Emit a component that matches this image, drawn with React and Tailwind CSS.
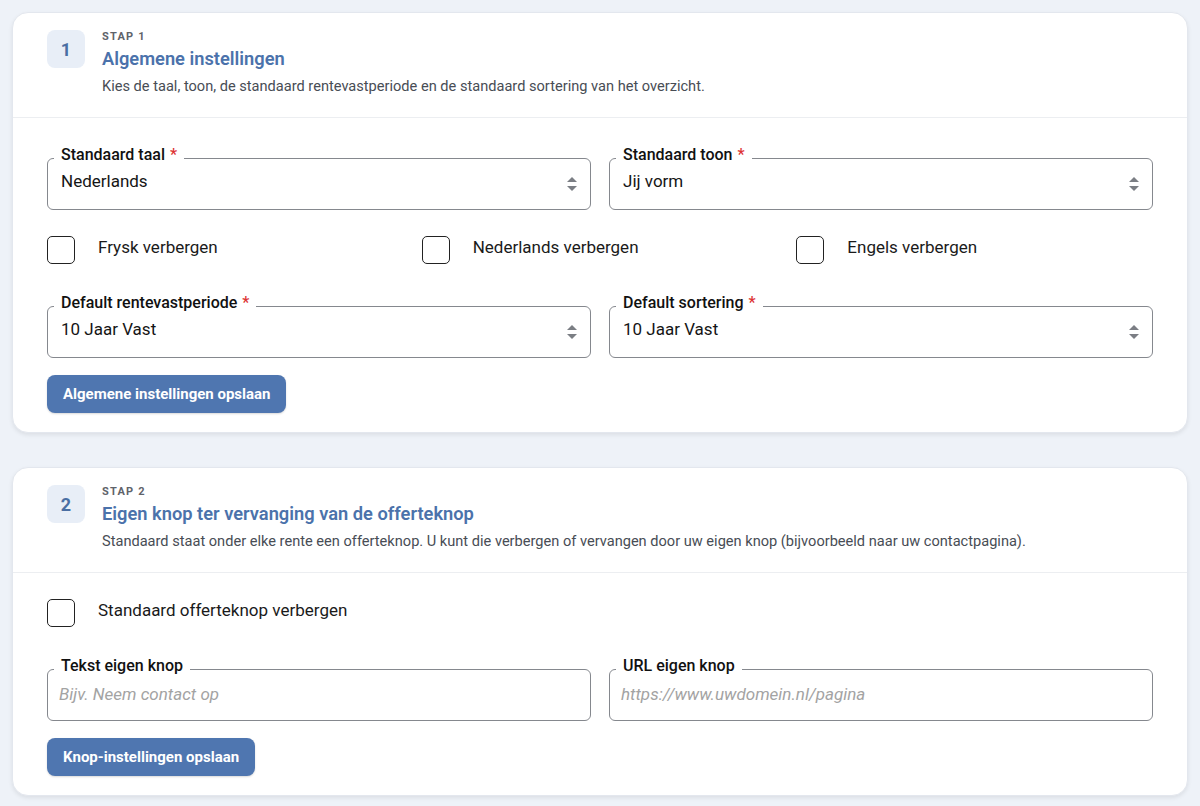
import React from "react";

const font = { fontFamily: "Roboto, 'Noto Sans', sans-serif" };

function Arrows() {
  return (
    <svg width="10" height="14" viewBox="0 0 10 14" className="absolute right-[13px] top-[18px]">
      <path d="M5 0 L10 5 L0 5 Z" fill="#7b7e84" />
      <path d="M0 9 L10 9 L5 14 Z" fill="#7b7e84" />
    </svg>
  );
}

function Field({ label, required, value, placeholder, select }) {
  return (
    <div className="relative h-[52px] rounded-[6px] border border-[#85888e] bg-white">
      <div className="absolute left-[6px] top-[-14px] bg-white px-[7px] text-[16px] font-medium leading-[20px] text-[#111]">
        {label}
        {required && <span className="ml-[5px] text-[#d33]">*</span>}
      </div>
      {placeholder ? (
        <div className="pl-[11px] pt-[12px] text-[17px] italic leading-[24px] text-[#a3a3a3]">{placeholder}</div>
      ) : (
        <div className="pl-[13px] pt-[10px] text-[17px] leading-[24px] text-[#151515]">{value}</div>
      )}
      {select && <Arrows />}
    </div>
  );
}

function Check({ label }) {
  return (
    <div className="flex items-center gap-[23px]">
      <div className="h-[28px] w-[28px] shrink-0 rounded-[5px] border-[1.5px] border-[#222] bg-white" />
      <span className="text-[17px] leading-[24px] text-[#1a1a1a] -mt-[6px]">{label}</span>
    </div>
  );
}

function Header({ n, title, desc }) {
  return (
    <div className="flex gap-[17px] border-b border-[#eceef1] pl-[34px] pt-[17px] pb-[21px]">
      <div className="flex h-[38px] w-[38px] shrink-0 items-center justify-center rounded-[8px] bg-[#e8eef7] text-[18px] font-bold text-[#4a6ea3]">
        {n}
      </div>
      <div className="flex flex-col">
        <div className="text-[11px] font-bold uppercase leading-[14px] tracking-[1.2px] text-[#5f636a]">Stap {n}</div>
        <div className="mt-[2px] text-[18.3px] font-semibold leading-[26px] text-[#4b72ab]">{title}</div>
        <div className="mt-[4px] text-[14.6px] leading-[20px] text-[#484d55]">{desc}</div>
      </div>
    </div>
  );
}

function Button({ children }) {
  return (
    <button className="h-[38px] rounded-[8px] bg-[#4f76b0] px-[16px] text-[15px] font-bold text-white shadow-[0_1px_2px_rgba(0,0,0,0.15)]">
      {children}
    </button>
  );
}

export default function App() {
  return (
    <div className="min-h-[806px] bg-[#eef2f8] px-[12px] pt-[12px]" style={font}>
      <div className="rounded-[16px] border border-[#e3e7ee] bg-white shadow-[0_2px_4px_rgba(0,0,0,0.08)]">
        <Header
          n="1"
          title="Algemene instellingen"
          desc="Kies de taal, toon, de standaard rentevastperiode en de standaard sortering van het overzicht."
        />
        <div className="px-[34px] pt-[40px] pb-[19px]">
          <div className="grid grid-cols-2 gap-[18px]">
            <Field label="Standaard taal" required value="Nederlands" select />
            <Field label="Standaard toon" required value="Jij vorm" select />
          </div>
          <div className="mt-[26px] grid grid-cols-3 gap-[18px]">
            <Check label="Frysk verbergen" />
            <Check label="Nederlands verbergen" />
            <Check label="Engels verbergen" />
          </div>
          <div className="mt-[42px] grid grid-cols-2 gap-[18px]">
            <Field label="Default rentevastperiode" required value="10 Jaar Vast" select />
            <Field label="Default sortering" required value="10 Jaar Vast" select />
          </div>
          <div className="mt-[17px]">
            <Button>Algemene instellingen opslaan</Button>
          </div>
        </div>
      </div>

      <div className="mt-[34px] rounded-[16px] border border-[#e3e7ee] bg-white shadow-[0_2px_4px_rgba(0,0,0,0.08)]">
        <Header
          n="2"
          title="Eigen knop ter vervanging van de offerteknop"
          desc="Standaard staat onder elke rente een offerteknop. U kunt die verbergen of vervangen door uw eigen knop (bijvoorbeeld naar uw contactpagina)."
        />
        <div className="px-[34px] pt-[26px] pb-[19px]">
          <Check label="Standaard offerteknop verbergen" />
          <div className="mt-[42px] grid grid-cols-2 gap-[18px]">
            <Field label="Tekst eigen knop" placeholder="Bijv. Neem contact op" />
            <Field label="URL eigen knop" placeholder="https://www.uwdomein.nl/pagina" />
          </div>
          <div className="mt-[17px]">
            <Button>Knop-instellingen opslaan</Button>
          </div>
        </div>
      </div>
    </div>
  );
}
